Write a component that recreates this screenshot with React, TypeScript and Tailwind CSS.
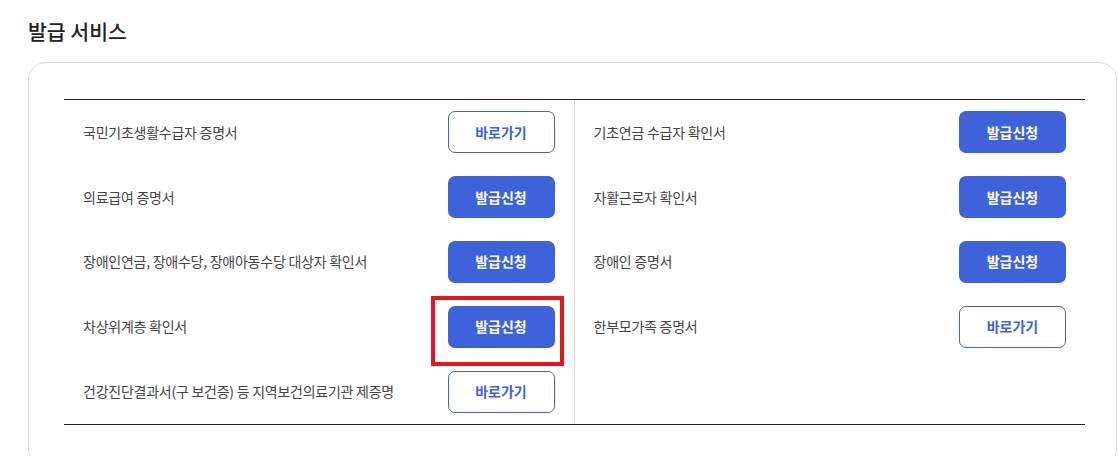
import React from "react";

type Item = {
  label: string;
  action: "apply" | "link";
  highlight?: boolean;
};

const leftItems: Item[] = [
  { label: "국민기초생활수급자 증명서", action: "link" },
  { label: "의료급여 증명서", action: "apply" },
  { label: "장애인연금, 장애수당, 장애아동수당 대상자 확인서", action: "apply" },
  { label: "차상위계층 확인서", action: "apply", highlight: true },
  { label: "건강진단결과서(구 보건증) 등 지역보건의료기관 제증명", action: "link" },
];

const rightItems: Item[] = [
  { label: "기초연금 수급자 확인서", action: "apply" },
  { label: "자활근로자 확인서", action: "apply" },
  { label: "장애인 증명서", action: "apply" },
  { label: "한부모가족 증명서", action: "link" },
];

const ActionButton = ({ action }: { action: Item["action"] }) =>
  action === "apply" ? (
    <button className="flex h-[42px] w-[107px] items-center justify-center rounded-[7px] bg-[#3e62d9] text-[14px] font-bold text-white">
      발급신청
    </button>
  ) : (
    <button className="flex h-[42px] w-[107px] items-center justify-center rounded-[7px] border border-[#3e62d9] bg-white text-[14px] font-bold text-[#3e62d9]">
      바로가기
    </button>
  );

const Row = ({ item }: { item: Item }) => (
  <div className="flex h-[64.8px] items-center justify-between pl-[19px] pr-[19px]">
    <span className="text-[14px] tracking-[-0.25px] text-[#444]">{item.label}</span>
    <div className="relative">
      <ActionButton action={item.action} />
      {item.highlight ? (
        <div className="pointer-events-none absolute -left-[17px] -right-[9px] -top-[10px] -bottom-[18px] border-[4px] border-[#e8141c]" />
      ) : null}
    </div>
  </div>
);

export default function App() {
  return (
    <div
      className="h-[456px] w-[1118px] overflow-hidden bg-white pl-[28px]"
      style={{ fontFamily: '"Noto Sans CJK KR", "Noto Sans", sans-serif' }}
    >
      <h2 className="pt-[16px] text-[20.5px] font-medium leading-[30px] text-[#222]">
        발급 서비스
      </h2>
      <div className="mr-[1px] mt-[16px] rounded-[18px] border border-[#dedede] pb-[40px] pl-[35px] pr-[31px] pt-[36px]">
        <div className="grid grid-cols-2 border-b border-t border-[#222]">
          <div className="border-r border-[#dddddd]">
            {leftItems.map((item) => (
              <Row key={item.label} item={item} />
            ))}
          </div>
          <div>
            {rightItems.map((item) => (
              <Row key={item.label} item={item} />
            ))}
          </div>
        </div>
      </div>
    </div>
  );
}
